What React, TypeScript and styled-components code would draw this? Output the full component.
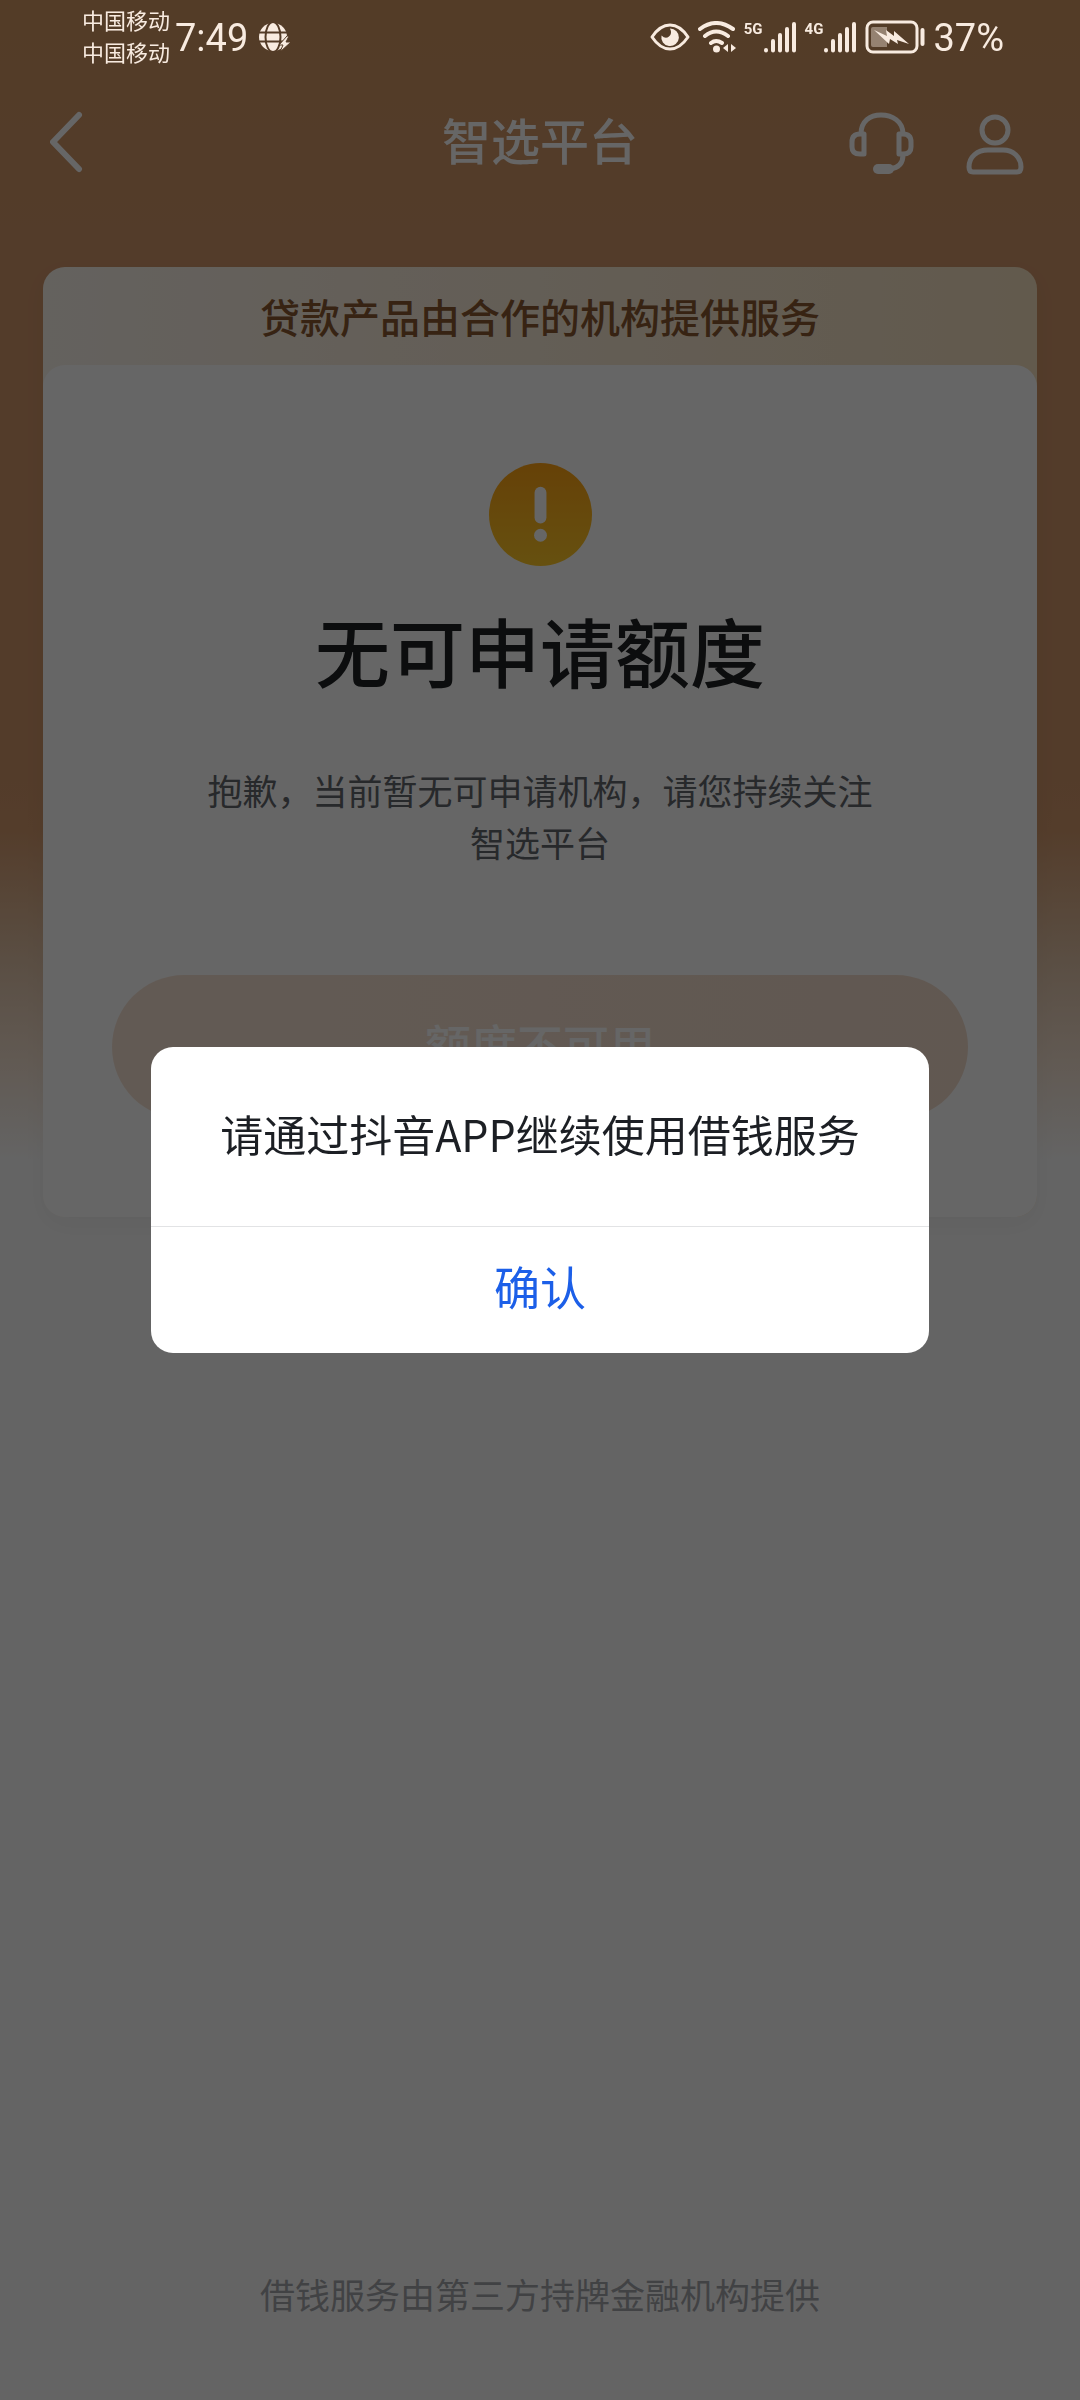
import React from "react";
import styled, { createGlobalStyle } from "styled-components";

const GlobalStyle = createGlobalStyle`
  *, *::before, *::after { box-sizing: border-box; }
  body {
    margin: 0;
    font-family: "Noto Sans CJK SC", "Noto Sans", sans-serif;
    background: #fafafa;
  }
  button { font: inherit; border: 0; padding: 0; background: none; cursor: pointer; }
  h1, h2, p { margin: 0; font-weight: 400; }
  svg { display: block; flex: none; }
`;

const Screen = styled.div`
  min-height: 100vh;
  display: flex;
  flex-direction: column;
  background: linear-gradient(#d09662 0, #d0966a 260px, #d0966a 780px, #d2996c 830px, #e1c3a8 960px, #f3e0cf 1060px, #fafafa 1160px);
`;

const StatusBar = styled.div`
  position: fixed;
  inset: 0 0 auto 0;
  z-index: 3;
  height: 74px;
  padding: 0 76px 0 82px;
  display: flex;
  align-items: center;
  justify-content: space-between;
  color: #f8ebe0;
`;

const StatusGroup = styled.div`
  display: flex;
  align-items: center;
  gap: ${(p: { $gap: number }) => p.$gap}px;
`;

const Carriers = styled.div`
  display: flex;
  flex-direction: column;
  padding-bottom: 4px;
  font-size: 22px;
  line-height: 32px;
`;

const StatusValue = styled.span`
  padding-top: 2px;
  font: 400 38px/48px Roboto, sans-serif;
`;

const Signal = styled.div`
  display: flex;
  align-items: flex-start;
`;

const NetworkLabel = styled.span`
  font: 700 15px/16px Roboto, sans-serif;
`;

const Header = styled.header`
  margin-top: 72px;
  height: 140px;
  padding: 0 50px;
  display: grid;
  grid-template-columns: 1fr auto 1fr;
  align-items: center;
  color: #fff;
`;

const HeaderTitle = styled.h1`
  padding-bottom: 6px;
  font-size: 49px;
  line-height: 72px;
  font-weight: 500;
`;

const HeaderActions = styled.div`
  display: flex;
  justify-content: flex-end;
  gap: 51px;
  padding-top: 4px;
`;

const Main = styled.main`
  flex: 1;
  display: flex;
  flex-direction: column;
  padding: 55px 43px 78px;
`;

const Card = styled.section`
  border-radius: 22px;
  background: linear-gradient(90deg, #fbf4ec, #f5e0c0);
  box-shadow: 0 8px 24px rgba(0, 0, 0, 0.04);
`;

const Banner = styled.p`
  height: 98px;
  display: flex;
  align-items: center;
  justify-content: center;
  font-size: 40px;
  font-weight: 500;
  color: #8a5830;
`;

const Panel = styled.div`
  display: flex;
  flex-direction: column;
  align-items: center;
  padding: 98px 69px;
  border-radius: 22px;
  background: #fff;
`;

const ResultTitle = styled.h2`
  margin-top: 30px;
  font-size: 75px;
  line-height: 108px;
  font-weight: 500;
  color: #202224;
`;

const ResultText = styled.p`
  margin-top: 60px;
  max-width: 690px;
  font-size: 35px;
  line-height: 52px;
  text-align: center;
  color: #63666c;
`;

const ApplyButton = styled.button`
  && {
    margin-top: 107px;
    width: 100%;
    height: 144px;
    padding-bottom: 8px;
    border-radius: 72px;
    background: linear-gradient(90deg, #f6e2d3, #f2dccb);
    font-size: 46px;
    font-weight: 500;
    color: #fff;
  }
`;

const Footer = styled.footer`
  margin-top: auto;
  font-size: 35px;
  line-height: 56px;
  text-align: center;
  color: #a4a6aa;
`;

const Overlay = styled.div`
  position: fixed;
  inset: 0;
  z-index: 2;
  display: flex;
  align-items: center;
  justify-content: center;
  background: rgba(0, 0, 0, 0.6);
`;

const Dialog = styled.div`
  width: 72%;
  overflow: hidden;
  border-radius: 22px;
  background: #fff;
`;

const DialogMessage = styled.p`
  padding: 54px 32px 60px;
  font-size: 43px;
  line-height: 65px;
  text-align: center;
  color: #1c1f24;
`;

const ConfirmButton = styled.button`
  && {
    width: 100%;
    height: 127px;
    padding-bottom: 10px;
    border-top: 1px solid #e2e3e5;
    font-size: 46px;
    color: #1c5fe8;
  }
`;

const BackButton = styled.button`
  && { justify-self: start; color: inherit; }
`;

const IconButton = styled.button`
  && { color: inherit; }
`;

const Globe = () => (
  <svg width="32" height="30" viewBox="0 0 32 30" aria-hidden="true">
    <circle cx="14" cy="15" r="14" fill="currentColor" />
    <g fill="none" stroke="#533b27" strokeWidth="2">
      <ellipse cx="14" cy="15" rx="7.500" ry="15" />
      <path d="M0 10.500h28M0 19.500h28" />
    </g>
    <path d="M28 14l-8 9h4l-3 7 11-10h-5l3-6z" fill="currentColor" stroke="#533b27" strokeWidth="1" />
  </svg>
);

const Eye = () => (
  <svg width="40" height="28" viewBox="0 0 40 28" aria-hidden="true">
    <path d="M2 14Q10 2 20 2t18 12Q30 26 20 26T2 14z" fill="none" stroke="currentColor" strokeWidth="3" strokeLinejoin="round" />
    <path d="M20 5.500a8.800 8.800 0 1 1-8.500 7q4 4 7.500 1t1-8z" fill="currentColor" />
  </svg>
);

const Wifi = () => (
  <svg width="38" height="32" viewBox="0 0 38 32" aria-hidden="true">
    <g fill="none" stroke="currentColor" strokeWidth="4" strokeLinecap="round">
      <path d="M2 8q16-12 33 0M7 15q11-9 23 0M13 22q5-4 11 0" />
    </g>
    <circle cx="18.500" cy="28" r="3.500" fill="currentColor" />
    <path d="M25 27l5-4v8zM38 27l-5-4v8z" fill="currentColor" />
  </svg>
);

const Bars = () => (
  <svg width="34" height="32" viewBox="0 0 34 32" aria-hidden="true">
    <path d="M3 29v.500M10 20v9.500M17 14v15.500M24 8v21.500M31 3v26.500" stroke="currentColor" strokeWidth="4" strokeLinecap="round" />
  </svg>
);

const Battery = () => (
  <svg width="60" height="34" viewBox="0 0 60 34" aria-hidden="true">
    <rect x="2" y="2" width="50" height="30" rx="6" fill="none" stroke="currentColor" strokeWidth="3" />
    <path d="M8 7h14v20H8q-2 0-2-2V9q0-2 2-2z" fill="currentColor" opacity=".4" />
    <path d="M9 10l13 6-1-6 8 6 0-5 15 13-12-4 1 4-8-5-1 5z" fill="currentColor" />
    <path d="M57.500 10v14" stroke="currentColor" strokeWidth="4" strokeLinecap="round" />
  </svg>
);

const BackIcon = () => (
  <svg width="36" height="62" viewBox="4 0 36 62" aria-hidden="true">
    <path d="M33 4L7 31l26 27" fill="none" stroke="currentColor" strokeWidth="6" strokeLinecap="round" strokeLinejoin="round" />
  </svg>
);

const HeadsetIcon = () => (
  <svg width="66" height="64" viewBox="0 0 66 64" fill="none" stroke="currentColor" strokeWidth="5" aria-hidden="true">
    <path d="M12 22C12 9 21 3 32 3s22 6 22 19M54 43c0 9-5 13-13 14" />
    <path d="M15 22H11q-8 0-8 8v5q0 7 8 7h4zM50 22h4q8 0 8 8v5q0 7-8 7h-4z" strokeLinejoin="round" />
    <path d="M29 57h11" strokeWidth="10" strokeLinecap="round" />
  </svg>
);

const UserIcon = () => (
  <svg width="64" height="64" viewBox="-1 0 64 64" fill="none" stroke="currentColor" strokeWidth="5" aria-hidden="true">
    <circle cx="28" cy="18" r="13" />
    <path d="M21 38h15c10 0 18 7 18 17q0 5-4 5H6q-4 0-4-5c0-10 8-17 19-17z" />
  </svg>
);

const WarningIcon = () => (
  <svg width="103" height="103" viewBox="0 0 104 104" aria-hidden="true">
    <defs>
      <linearGradient id="warn" x1="0" y1="0" x2="0" y2="1">
        <stop stopColor="#ffa314" />
        <stop offset="1" stopColor="#ffc928" />
      </linearGradient>
    </defs>
    <circle cx="52" cy="52" r="52" fill="url(#warn)" />
    <path d="M52 30v25" stroke="#fff" strokeWidth="12" strokeLinecap="round" />
    <circle cx="52" cy="73" r="6.500" fill="#fff" />
  </svg>
);

export default function App() {
  return (
    <>
      <GlobalStyle />
      <StatusBar>
        <StatusGroup $gap={5}>
          <Carriers>
            <span>中国移动</span>
            <span>中国移动</span>
          </Carriers>
          <StatusGroup $gap={11}>
            <StatusValue>7:49</StatusValue>
            <Globe />
          </StatusGroup>
        </StatusGroup>
        <StatusGroup $gap={8}>
          <Eye />
          <Wifi />
          <Signal><NetworkLabel>5G</NetworkLabel><Bars /></Signal>
          <Signal><NetworkLabel>4G</NetworkLabel><Bars /></Signal>
          <Battery />
          <StatusValue>37%</StatusValue>
        </StatusGroup>
      </StatusBar>
      <Screen>
        <Header>
          <BackButton type="button" aria-label="返回"><BackIcon /></BackButton>
          <HeaderTitle>智选平台</HeaderTitle>
          <HeaderActions>
            <IconButton type="button" aria-label="客服"><HeadsetIcon /></IconButton>
            <IconButton type="button" aria-label="我的"><UserIcon /></IconButton>
          </HeaderActions>
        </Header>
        <Main>
          <Card>
            <Banner>贷款产品由合作的机构提供服务</Banner>
            <Panel>
              <WarningIcon />
              <ResultTitle>无可申请额度</ResultTitle>
              <ResultText>抱歉，当前暂无可申请机构，请您持续关注智选平台</ResultText>
              <ApplyButton type="button">额度不可用</ApplyButton>
            </Panel>
          </Card>
          <Footer>借钱服务由第三方持牌金融机构提供</Footer>
        </Main>
      </Screen>
      <Overlay>
        <Dialog role="dialog" aria-modal="true" aria-labelledby="dialog-message">
          <DialogMessage id="dialog-message">请通过抖音APP继续使用借钱服务</DialogMessage>
          <ConfirmButton type="button">确认</ConfirmButton>
        </Dialog>
      </Overlay>
    </>
  );
}
